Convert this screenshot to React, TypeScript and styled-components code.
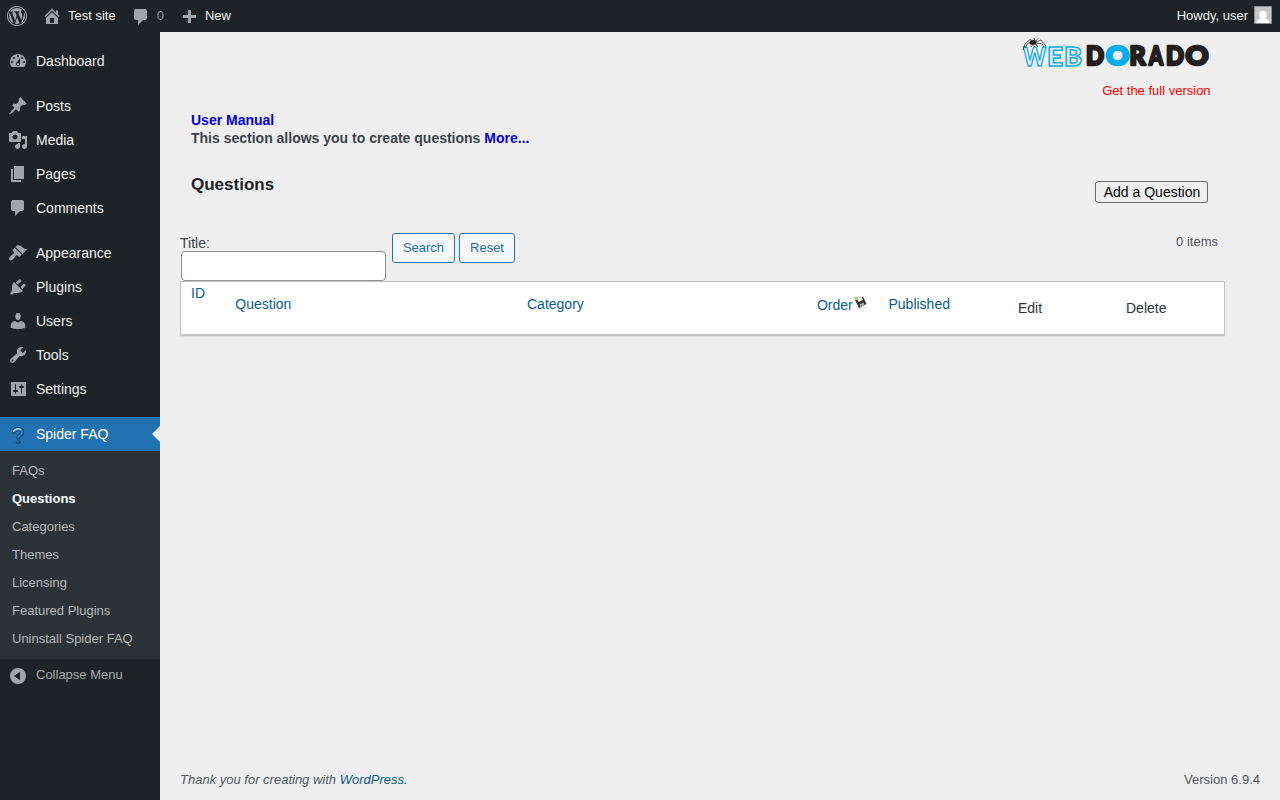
import React from "react";
import styled, { createGlobalStyle, css } from "styled-components";

const Global = createGlobalStyle`
  * { box-sizing: border-box; }
  html, body, #root { margin: 0; height: 100%; }
  body {
    background: #efefef;
    color: #3c434a;
    font: 13px/18px "Liberation Sans", Arial, sans-serif;
    overflow: hidden;
  }
  a { color: inherit; text-decoration: none; }
`;

const Page = styled.div`
  display: flex;
  flex-direction: column;
  height: 800px;
`;

const AdminBar = styled.header`
  display: flex;
  justify-content: space-between;
  height: 32px;
  background: #1d2327;
  color: #f0f0f1;
  font-size: 13px;
  line-height: 32px;
`;

const BarGroup = styled.nav`
  display: flex;
`;

const BarItem = styled.a<{ $left: number; $muted?: boolean; $gap: number }>`
  display: flex;
  align-items: center;
  gap: ${(p) => p.$gap}px;
  height: 32px;
  margin-left: ${(p) => p.$left}px;
  color: ${(p) => (p.$muted ? "#8f9498" : "#f0f0f1")};
`;

const Avatar = styled.svg`
  display: block;
  width: 18px;
  height: 18px;
  margin: -2px 8px 0 0;
`;

const Body = styled.div`
  display: flex;
  flex: 1;
  min-height: 0;
`;

const Sidebar = styled.aside`
  width: 160px;
  padding-top: 12px;
  background: #1d2327;
`;

const MenuItem = styled.a<{ $gapBefore?: boolean; $active?: boolean }>`
  position: relative;
  display: flex;
  align-items: center;
  height: 34px;
  margin-top: ${(p) => (p.$gapBefore ? 11 : 0)}px;
  padding-left: 8px;
  gap: 8px;
  color: #f0f0f1;
  font-size: 14px;
  ${(p) =>
    p.$active &&
    css`
      background: #2271b1;
      color: #fff;
      &::after {
        content: "";
        position: absolute;
        right: 0;
        top: 9px;
        border: 8px solid transparent;
        border-right-color: #efefef;
      }
    `}
`;

const SubMenu = styled.ul`
  margin: 0;
  padding: 6px 0 6px;
  list-style: none;
  background: #2c3338;
`;

const SubItem = styled.li<{ $current?: boolean }>`
  height: 28px;
  padding-left: 12px;
  line-height: 27px;
  color: ${(p) => (p.$current ? "#fff" : "#b5b8bb")};
  font-weight: ${(p) => (p.$current ? 600 : 400)};
`;

const Collapse = styled.a`
  display: flex;
  align-items: center;
  height: 34px;
  padding-left: 8px;
  gap: 8px;
  color: #a7aaad;
  line-height: 31px;
`;

const CollapseLabel = styled.span`
  margin-top: -3px;
`;

const Main = styled.main`
  display: flex;
  flex: 1;
  flex-direction: column;
  padding: 0 20px;
`;

const Intro = styled.section`
  display: flex;
  justify-content: space-between;
  height: 149px;
  padding: 0 50px 0 11px;
`;

const Manual = styled.div`
  padding-top: 79px;
  font-size: 14px;
  font-weight: 700;
  line-height: 18px;
`;

const BlueLink = styled.a`
  && { color: #0000ee; }
`;

const Brand = styled.div`
  display: flex;
  flex-direction: column;
  align-items: flex-end;
  padding-top: 5px;
`;

const Logo = styled.svg`
  display: block;
  width: 190px;
  height: 34px;
  overflow: visible;
  font-family: Lato, sans-serif;
  font-weight: 900;
`;

const FullVersion = styled.a`
  margin: 11px -0.6px 0 0;
  && { color: #f00; }
`;

const TitleRow = styled.div`
  display: flex;
  justify-content: space-between;
  height: 52px;
  padding: 0 52px 0 11px;
`;

const Heading = styled.h2`
  margin: -5px 0 0;
  color: #1d2327;
  font-size: 17px;
  line-height: 18px;
  padding: 0;
`;

const AddButton = styled.button`
  width: 113px;
  height: 22px;
  padding: 0 0 0 1px;
  border: 1px solid #6b6b6b;
  border-radius: 3px;
  background: #efefef;
  color: #000;
  font: 14px/18px "Liberation Sans", Arial, sans-serif;
`;

const Filters = styled.form`
  display: flex;
  height: 48px;
`;

const Field = styled.label`
  display: flex;
  flex-direction: column;
  width: 212px;
  padding-top: 2px;
  font-size: 14px;
  line-height: 16px;
`;

const TextInput = styled.input`
  width: 205px;
  height: 30px;
  margin: 0 0 0 1px;
  padding: 0 8px;
  border: 1px solid #8c8f94;
  border-radius: 4px;
  background: #fff;
`;

const FilterButton = styled.button<{ $width: number }>`
  width: ${(p) => p.$width}px;
  height: 30px;
  margin-right: 4px;
  padding: 0;
  border: 1px solid #2271b1;
  border-radius: 3px;
  background: #f6f7f7;
  color: #2271b1;
  font: 13px/26px "Liberation Sans", Arial, sans-serif;
`;

const Count = styled.span`
  margin: 0 42px 0 auto;
  color: #50575e;
`;

const Table = styled.div`
  display: grid;
  grid-template-columns: 44.3px 291.7px 290px 71.5px 129.5px 108px 1fr;
  width: 1045px;
  height: 55px;
  padding-left: 10px;
  border: 1px solid #c3c4c7;
  border-bottom-width: 2px;
  box-shadow: 0 1px 1px rgba(0, 0, 0, 0.04);
  background: #fff;
  font-size: 14px;
  line-height: 18px;
`;

const HeadCell = styled.div<{ $top: number; $link?: boolean }>`
  display: flex;
  padding-top: ${(p) => p.$top}px;
  color: ${(p) => (p.$link ? "#0a5b8e" : "#2c3338")};
`;

const Disk = styled.svg`
  display: block;
  width: 16px;
  height: 16px;
  margin-top: -1px;
`;

const Footer = styled.footer`
  display: flex;
  justify-content: space-between;
  margin-top: auto;
  padding-bottom: 11px;
  color: #50575e;
`;

const FooterLink = styled.a`
  && { color: #0a5b8e; }
`;

const IconSvg = styled.svg<{ $size: number; $drop: number }>`
  display: block;
  flex: none;
  width: ${(p) => p.$size}px;
  height: ${(p) => p.$size}px;
  margin-top: ${(p) => p.$drop}px;
  fill: #a0a5aa;
`;

const icons = {
  wordpress:
    "M20 10c0-5.52-4.48-10-10-10S0 4.48 0 10s4.48 10 10 10 10-4.48 10-10zM10 1.01c4.97 0 8.99 4.02 8.99 8.99s-4.02 8.99-8.99 8.99S1.01 14.97 1.01 10 5.03 1.01 10 1.01zM8.01 14.82L4.96 6.61c.49-.03 1.05-.08 1.05-.08.43-.05.38-1.01-.06-.99 0 0-1.29.1-2.13.1-.15 0-.33 0-.52-.01 1.44-2.17 3.9-3.6 6.7-3.6 2.09 0 3.99.79 5.41 2.09-.6-.08-1.45.35-1.45 1.42 0 .66.38 1.22.79 1.88.31.54.5 1.22.5 2.21 0 1.34-1.27 4.48-1.27 4.48l-2.71-7.5c.48-.03.75-.16.75-.16.43-.05.38-1.1-.05-1.08 0 0-1.3.11-2.14.11-.78 0-2.11-.11-2.11-.11-.43-.02-.48 1.06-.05 1.08l.84.08 1.12 3.04zM14.03 16.97L16.64 10s.67-1.69.39-3.81c.63 1.14.94 2.42.94 3.81 0 2.96-1.56 5.58-3.94 6.97zM2.68 6.77L6.5 17.25c-2.67-1.3-4.47-4.08-4.47-7.25 0-1.16.2-2.23.65-3.23zM10.130 11.300l2.290 6.250c-.75.27-1.57.42-2.42.42-.72 0-1.41-.11-2.060-.3z",
  home: "M16 8.5l1.53 1.53-1.06 1.06L10 4.6l-6.47 6.49-1.06-1.06L10 2.5l4 4v-2h2v4zm-6-2.46l6 5.99V18H4v-5.97zM12 17v-5H8v5h4z",
  comment:
    "M5 2h9c1.1 0 2 .9 2 2v7c0 1.1-.9 2-2 2h-2l-5 5v-5H5c-1.1 0-2-.9-2-2V4c0-1.1.9-2 2-2z",
  plus: "M17 9v3h-5v5H9v-5H4V9h5V4h3v5h5z",
  dashboard:
    "M3.76 16h12.48c1.1-1.37 1.76-3.11 1.76-5 0-4.42-3.58-8-8-8s-8 3.58-8 8c0 1.89.66 3.63 1.76 5zM10 4c.55 0 1 .45 1 1s-.45 1-1 1-1-.45-1-1 .45-1 1-1zM6 6c.55 0 1 .45 1 1s-.45 1-1 1-1-.45-1-1 .45-1 1-1zm8 0c.55 0 1 .45 1 1s-.45 1-1 1-1-.45-1-1 .45-1 1-1zm-5.37 5.55L12 7v6c0 1.1-.9 2-2 2s-2-.9-2-2c0-.57.24-1.08.63-1.45zM4 10c.55 0 1 .45 1 1s-.45 1-1 1-1-.45-1-1 .45-1 1-1zm12 0c.55 0 1 .45 1 1s-.45 1-1 1-1-.45-1-1 .45-1 1-1zm-5 3c0-.55-.45-1-1-1s-1 .45-1 1 .45 1 1 1 1-.45 1-1z",
  post: "M10.44 3.02l1.82-1.82 6.36 6.35-1.83 1.82c-1.05-.68-2.48-.57-3.41.36l-.75.75c-.92.93-1.04 2.35-.35 3.41l-1.83 1.82-2.41-2.41-2.8 2.79c-.42.42-3.38 2.71-3.8 2.29s1.86-3.39 2.28-3.81l2.79-2.79L4.1 9.36l1.83-1.82c1.05.69 2.48.57 3.4-.36l.75-.75c.93-.92 1.05-2.35.36-3.41z",
  media:
    "M13 11V4c0-.55-.45-1-1-1h-1.67L9 1H5L3.67 3H2c-.55 0-1 .45-1 1v7c0 .55.45 1 1 1h10c.55 0 1-.45 1-1zM7 4.5c1.38 0 2.5 1.12 2.5 2.5S8.38 9.5 7 9.5 4.5 8.38 4.5 7 5.62 4.5 7 4.5zM14 6h5v10.5c0 1.38-1.12 2.5-2.5 2.5S14 17.88 14 16.5s1.12-2.5 2.5-2.5c.17 0 .34.02.5.05V9h-3V6zm-4 8.05V13h2v3.5c0 1.38-1.12 2.5-2.5 2.5S7 17.88 7 16.5 8.12 14 9.5 14c.17 0 .34.02.5.05z",
  page: "M6 15V2h10v13H6zm-1 1h8v2H3V5h2v11z",
  appearance:
    "M14.48 11.06L7.41 3.99l1.5-1.5c.5-.56 2.3-.47 3.51.32 1.21.8 1.43 1.28 2.91 2.1 1.18.64 2.45 1.26 4.45.85zm-.71.71L6.7 4.7 4.93 6.47c-.39.39-.39 1.02 0 1.41l1.06 1.06c.39.39.39 1.03 0 1.42-.6.6-1.43 1.11-2.21 1.69-.35.26-.7.53-1.01.84C1.43 14.23.4 16.08 1.4 17.07c.99 1 2.84-.03 4.18-1.36.31-.31.58-.66.85-1.02.57-.78 1.08-1.61 1.69-2.21.39-.39 1.02-.39 1.41 0l1.06 1.06c.39.39 1.02.39 1.41 0z",
  plugins:
    "M13.11 4.36L9.87 7.6 8 5.73l3.24-3.24c.35-.34 1.05-.2 1.56.32.52.51.66 1.21.31 1.55zm-8 1.77l.91-1.12 9.01 9.01-1.19.84c-.71.71-2.63 1.16-3.82 1.16H6.14L4.9 17.26c-.59.59-1.54.59-2.12 0-.59-.58-.59-1.53 0-2.12l1.24-1.24v-3.88c0-1.13.4-3.19 1.09-3.89zm7.26 3.97l3.24-3.24c.34-.35 1.04-.21 1.55.31.52.51.66 1.21.31 1.55l-3.24 3.25z",
  users:
    "M10 9.25c-2.27 0-2.73-3.44-2.73-3.44C7 4.02 7.82 2 9.97 2c2.16 0 2.98 2.02 2.71 3.81 0 0-.41 3.44-2.68 3.44zm0 2.57L12.72 10c2.39 0 4.52 2.33 4.52 4.53v2.49s-3.65 1.13-7.24 1.13c-3.65 0-7.24-1.13-7.24-1.13v-2.49c0-2.25 1.94-4.48 4.47-4.48z",
  tools:
    "M16.68 9.77c-1.34 1.34-3.3 1.67-4.95.99l-5.41 6.52c-.99.99-2.59.99-3.58 0s-.99-2.59 0-3.57l6.52-5.42c-.68-1.65-.35-3.61.99-4.95 1.28-1.28 3.12-1.62 4.72-1.06l-2.89 2.89 2.82 2.82 2.86-2.87c.53 1.58.18 3.39-1.08 4.65zM3.81 16.21c.4.39 1.04.39 1.43 0 .4-.4.4-1.04 0-1.43-.39-.4-1.03-.4-1.43 0-.39.39-.39 1.03 0 1.43z",
  settings:
    "M18 16V4c0-.55-.45-1-1-1H4c-.55 0-1 .45-1 1v12c0 .55.45 1 1 1h13c.55 0 1-.45 1-1zM8 11h1c.55 0 1 .45 1 1s-.45 1-1 1H8v1.5c0 .28-.22.5-.5.5s-.5-.22-.5-.5V13H6c-.55 0-1-.45-1-1s.45-1 1-1h1V5.5c0-.28.22-.5.5-.5s.5.22.5.5V11zm5-2h-1c-.55 0-1-.45-1-1s.45-1 1-1h1V5.5c0-.28.22-.5.5-.5s.5.22.5.5V7h1c.55 0 1 .45 1 1s-.45 1-1 1h-1v5.5c0 .28-.22.5-.5.5s-.5-.22-.5-.5V9z",
  collapse:
    "M10 2a8 8 0 1 0 0 16a8 8 0 1 0 0-16zM12 5.800v8.400L6 10z",
};

type IconName = keyof typeof icons;

const Icon = ({ name, size = 20, drop = 0 }: { name: IconName; size?: number; drop?: number }) => (
  <IconSvg viewBox="0 0 20 20" $size={size} $drop={drop} aria-hidden>
    <path fillRule="evenodd" d={icons[name]} />
  </IconSvg>
);

const QuestionIcon = () => (
  <IconSvg viewBox="0 0 20 20" $size={20} $drop={4}>
    <g fill="none" strokeLinecap="round">
      <path d="M6 6c.4-4 8.300-4 8.300.2c0 2.800-4 2.800-4 5.600" stroke="#154578" strokeWidth="4" />
      <path d="M6 5.800c.6-3.300 7.900-3.400 8.100.3c0 2.700-4 2.900-4 5.500" stroke="#2f86c8" strokeWidth="1.800" />
      <path d="M5.500 5.300c1-2.600 5-3.200 7.400-1.600" stroke="#8fe0f5" strokeWidth="1.500" />
    </g>
    <ellipse cx="10.200" cy="16.300" rx="2.500" ry="1.800" fill="#154578" />
    <ellipse cx="9.900" cy="15.900" rx="1.300" ry=".7" fill="#2a7fc4" />
  </IconSvg>
);

const menu: { label: string; icon: IconName; gap?: boolean }[] = [
  { label: "Dashboard", icon: "dashboard" },
  { label: "Posts", icon: "post", gap: true },
  { label: "Media", icon: "media" },
  { label: "Pages", icon: "page" },
  { label: "Comments", icon: "comment" },
  { label: "Appearance", icon: "appearance", gap: true },
  { label: "Plugins", icon: "plugins" },
  { label: "Users", icon: "users" },
  { label: "Tools", icon: "tools" },
  { label: "Settings", icon: "settings" },
];

const submenu = [
  "FAQs",
  "Questions",
  "Categories",
  "Themes",
  "Licensing",
  "Featured Plugins",
  "Uninstall Spider FAQ",
];

const wordmark = [
  { ch: "D", x: 66, w: 18 },
  { ch: "O", x: 86, w: 23, accent: true },
  { ch: "R", x: 109.5, w: 16 },
  { ch: "A", x: 129, w: 14 },
  { ch: "D", x: 146, w: 18 },
  { ch: "O", x: 165.5, w: 23 },
];

const BrandLogo = () => (
  <Logo viewBox="0 0 190 34" role="img" aria-label="Web Dorado">
    <text y="28.500" fill="none" stroke="#10aeea" strokeWidth="1.500" fontSize="26">
      <tspan x="3" textLength="23" lengthAdjust="spacingAndGlyphs">W</tspan>
      <tspan x="27" textLength="16" lengthAdjust="spacingAndGlyphs">E</tspan>
      <tspan x="44" textLength="18" lengthAdjust="spacingAndGlyphs">B</tspan>
    </text>
    <text y="27.700" fontSize="26" strokeWidth="2.600" strokeLinejoin="round">
      {wordmark.map((l, i) => (
        <tspan
          key={i}
          x={l.x}
          textLength={l.w}
          lengthAdjust="spacingAndGlyphs"
          fill={l.accent ? "#00aeef" : "#231f20"}
          stroke={l.accent ? "#00aeef" : "#231f20"}
        >
          {l.ch}
        </tspan>
      ))}
    </text>
    <g stroke="#333" fill="none" strokeWidth=".8">
      <path d="M15 5L10 2.500L5 7L3 13M14 6L8 6L5 11M16 5L21 3L26 9M16 6L22 7L24 10M14 6L11 10M15 4L14 1M16 4L18 1.500M15 6L18 10" />
      <ellipse cx="13" cy="5.500" rx="3.200" ry="2.200" fill="#222" />
    </g>
  </Logo>
);

export default function App() {
  return (
    <Page>
      <Global />
      <AdminBar>
        <BarGroup>
          <BarItem $left={7} $gap={0}><Icon name="wordpress" /></BarItem>
          <BarItem $left={15} $gap={6}><Icon name="home" /><span>Test site</span></BarItem>
          <BarItem $left={15} $gap={6} $muted><Icon name="comment" drop={2} /><span>0</span></BarItem>
          <BarItem $left={15} $gap={6}><Icon name="plus" /><span>New</span></BarItem>
        </BarGroup>
        <BarItem $left={0} $gap={6}>
          <span>Howdy, user</span>
          <Avatar viewBox="0 0 18 18">
            <path fill="#c6c6c6" stroke="#8c8f94" d="M.5.5h17v17H.5z" />
            <ellipse cx="9" cy="9" rx="3.700" ry="4.300" fill="#fff" />
            <path fill="#fff" d="M2.500 17c0-3 2-4 4.500-4.500v-2h4v2c2.500.5 4.500 1.500 4.500 4.500z" />
          </Avatar>
        </BarItem>
      </AdminBar>
      <Body>
        <Sidebar>
          {menu.map((m) => (
            <MenuItem key={m.label} $gapBefore={m.gap}>
              <Icon name={m.icon} />
              <span>{m.label}</span>
            </MenuItem>
          ))}
          <MenuItem $gapBefore $active>
            <QuestionIcon />
            <span>Spider FAQ</span>
          </MenuItem>
          <SubMenu>
            {submenu.map((s) => (
              <SubItem key={s} $current={s === "Questions"}>{s}</SubItem>
            ))}
          </SubMenu>
          <Collapse>
            <Icon name="collapse" />
            <CollapseLabel>Collapse Menu</CollapseLabel>
          </Collapse>
        </Sidebar>
        <Main>
          <Intro>
            <Manual>
              <BlueLink>User Manual</BlueLink>
              <br />
              This section allows you to create questions <BlueLink>More...</BlueLink>
            </Manual>
            <Brand>
              <BrandLogo />
              <FullVersion>Get the full version</FullVersion>
            </Brand>
          </Intro>
          <TitleRow>
            <Heading>Questions</Heading>
            <AddButton>Add a Question</AddButton>
          </TitleRow>
          <Filters>
            <Field>
              Title:
              <TextInput />
            </Field>
            <FilterButton type="button" $width={63}>Search</FilterButton>
            <FilterButton type="button" $width={56}>Reset</FilterButton>
            <Count>0 items</Count>
          </Filters>
          <Table>
            <HeadCell $top={2} $link>ID</HeadCell>
            <HeadCell $top={13} $link>Question</HeadCell>
            <HeadCell $top={13} $link>Category</HeadCell>
            <HeadCell $top={14} $link>
              Order
              <Disk viewBox="0 0 16 16">
                <path d="M3 11l8 3l3-2v2H5z" fill="#ddd" />
                <path d="M1.500 4L10 1.500L13.500 9L6 13z" fill="#333" />
                <path d="M4 3.500L8.500 2l1.500 3L5.500 7z" fill="#eee" />
                <path d="M6.500 9.500l4-2l1 2.500L7.500 12z" fill="#aaa" />
                <path d="M1 2h4v3H2z" fill="#a8d080" />
              </Disk>
            </HeadCell>
            <HeadCell $top={13} $link>Published</HeadCell>
            <HeadCell $top={17}>Edit</HeadCell>
            <HeadCell $top={17}>Delete</HeadCell>
          </Table>
          <Footer>
            <em>Thank you for creating with <FooterLink>WordPress</FooterLink>.</em>
            <span>Version 6.9.4</span>
          </Footer>
        </Main>
      </Body>
    </Page>
  );
}
